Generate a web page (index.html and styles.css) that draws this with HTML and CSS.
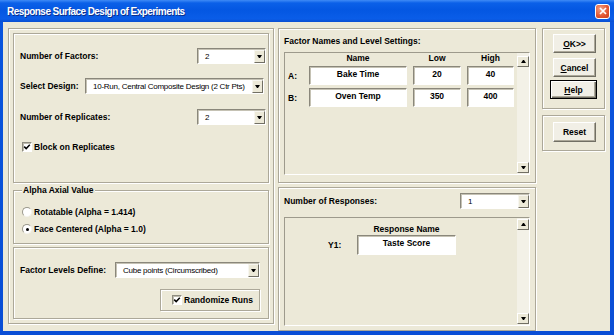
FILE: index.html
```html
<!DOCTYPE html>
<html>
<head>
<meta charset="utf-8">
<title>Response Surface Design of Experiments</title>
<link rel="stylesheet" href="styles.css">
</head>
<body>
<div class="window">
  <div class="titlebar">
    <span class="title">Response Surface Design of Experiments</span>
    <span class="close"><svg width="8" height="8" viewBox="0 0 8 8"><path d="M1 1L7 7M7 1L1 7" stroke="#fff" stroke-width="1.7"/></svg></span>
  </div>
  <div class="frame">
    <div class="client">
      <div class="col-left etched">
        <div class="panel design etched">
          <div class="row r1"><span class="lbl">Number of Factors:</span><div class="combo c-small"><span class="val">2</span><span class="drop"></span></div></div>
          <div class="row r2"><span class="lbl">Select Design:</span><div class="combo c-wide"><span class="val">10-Run, Central Composite Design (2 Ctr Pts)</span><span class="drop"></span></div></div>
          <div class="row r3"><span class="lbl">Number of Replicates:</span><div class="combo c-small"><span class="val">2</span><span class="drop"></span></div></div>
          <div class="check r4"><span class="box"><svg width="8" height="8" viewBox="0 0 8 8"><path d="M1.2 3.6L3.2 5.6L6.8 1.8" fill="none" stroke="#000" stroke-width="1.5"/></svg></span>Block on Replicates</div>
        </div>
        <div class="group alpha etched">
          <div class="legend">Alpha Axial Value</div>
          <div class="radio rad1"><span class="dot"></span>Rotatable (Alpha = 1.414)</div>
          <div class="radio rad2"><span class="dot on"></span>Face Centered (Alpha = 1.0)</div>
        </div>
        <div class="panel levels etched">
          <div class="row l1"><span class="lbl">Factor Levels Define:</span><div class="combo c-levels"><span class="val">Cube points (Circumscribed)</span><span class="drop"></span></div></div>
          <div class="rand etched"><span class="box"><svg width="8" height="8" viewBox="0 0 8 8"><path d="M1.2 3.6L3.2 5.6L6.8 1.8" fill="none" stroke="#000" stroke-width="1.5"/></svg></span>Randomize Runs</div>
        </div>
      </div>

      <div class="col-mid">
        <div class="panel names etched">
          <div class="ptitle">Factor Names and Level Settings:</div>
          <div class="list list1">
            <div class="fgrid">
              <span></span><span class="hdr">Name</span><span class="hdr">Low</span><span class="hdr">High</span>
              <span class="rlab">A:</span><span class="inp">Bake Time</span><span class="inp">20</span><span class="inp">40</span>
              <span class="rlab">B:</span><span class="inp">Oven Temp</span><span class="inp">350</span><span class="inp">400</span>
            </div>
            <div class="sb"><span class="sbtn up"></span><span class="sbtn down"></span></div>
          </div>
        </div>
        <div class="panel resp etched">
          <div class="row rr"><span class="lbl">Number of Responses:</span><div class="combo c-resp"><span class="val">1</span><span class="drop"></span></div></div>
          <div class="list list2">
            <div class="rgrid">
              <span></span><span class="hdr">Response Name</span>
              <span class="rlab y1">Y1:</span><span class="inp">Taste Score</span>
            </div>
            <div class="sb sb2"><span class="sbtn up"></span><span class="sbtn down"></span></div>
          </div>
        </div>
      </div>

      <div class="col-btn">
        <div class="bbox bbox1 etched">
          <div class="btn"><span><u>O</u>K&gt;&gt;</span></div>
          <div class="btn"><span><u>C</u>ancel</span></div>
          <div class="btn help"><span><u>H</u>elp</span></div>
        </div>
        <div class="bbox bbox2 etched">
          <div class="btn">Reset</div>
        </div>
      </div>
    </div>
  </div>
</div>
</body>
</html>
```

FILE: styles.css
```css
* { box-sizing: border-box; margin: 0; padding: 0; }
html, body { width: 614px; height: 335px; overflow: hidden; }
body {
  font-family: "Liberation Sans", Arial, sans-serif;
  font-size: 8.5px;
  color: #000;
  background: #0A52DB;
}
.window {
  width: 614px;
  height: 335px;
  display: flex;
  flex-direction: column;
  background: #0A52DB;
}
.titlebar {
  height: 22px;
  flex: none;
  display: flex;
  align-items: center;
  justify-content: space-between;
  padding: 0 4px 0 7px;
  background: linear-gradient(#3F8BF6 0, #0B60E8 3px, #0457E2 45%, #0A5DE8 85%, #0A4FD2 100%);
}
.title {
  color: #fff;
  font-size: 10px;
  font-weight: bold;
  letter-spacing: -0.55px;
  text-shadow: 1px 1px 0 #0A2F8A;
}
.close {
  width: 15px;
  height: 15px;
  border: 1px solid #fff;
  border-radius: 3px;
  background: radial-gradient(circle at 35% 30%, #F4A184, #E2552F 60%, #C9401D);
  display: flex;
  align-items: center;
  justify-content: center;
}
.frame {
  flex: 1;
  padding: 0 4px 4px 3px;
  background: linear-gradient(#0A55DE, #0A4ED6);
}
.client {
  height: 100%;
  background: #ECE9D8;
  display: flex;
  align-items: flex-start;
  padding: 6px 0 0 5px;
  overflow: hidden;
}
.etched {
  border: 1px solid #ACA899;
  box-shadow: inset 1px 1px 0 #fff, 1px 1px 0 #fff;
}

/* left column */
.col-left {
  width: 266px;
  height: 296px;
  padding: 4px;
  display: flex;
  flex-direction: column;
}
.design {
  height: 150px;
  display: flex;
  flex-direction: column;
  padding: 0 2px 0 6px;
}
.row {
  display: flex;
  align-items: center;
  justify-content: space-between;
  height: 16px;
}
.lbl { font-weight: bold; white-space: nowrap; }
.design .r1 { margin-top: 14px; }
.design .r2 { margin-top: 14px; padding-right: 2px; }
.design .r3 { margin-top: 15px; }
.check {
  display: flex;
  align-items: center;
  height: 12px;
  font-weight: bold;
}
.r4 { margin-top: 16px; padding-left: 2px; }
.box {
  width: 10px;
  height: 10px;
  flex: none;
  margin-right: 2px;
  background: #fff;
  border: 1px solid;
  border-color: #8E8C80 #fff #fff #8E8C80;
  box-shadow: inset 1px 1px 0 #BEBBAE;
  display: flex;
  align-items: center;
  justify-content: center;
}

.combo {
  height: 16px;
  background: #fff;
  border: 1px solid;
  border-color: #8A877B #fff #fff #8A877B;
  box-shadow: inset 1px 1px 0 #C5C2B4;
  display: flex;
  align-items: stretch;
  padding: 1px 0 0 1px;
}
.val {
  flex: 1;
  padding-left: 6px;
  white-space: nowrap;
  overflow: hidden;
  line-height: 13px;
  font-size: 8px;
  letter-spacing: -0.25px;
}
.drop {
  width: 11px;
  flex: none;
  background: #ECE9D8;
  border: 1px solid;
  border-color: #F7F6F0 #716F64 #716F64 #F7F6F0;
  display: flex;
  align-items: center;
  justify-content: center;
}
.drop::after, .sbtn.down::after {
  content: "";
  width: 1px;
  height: 0;
  border-left: 2px solid transparent;
  border-right: 2px solid transparent;
  border-top: 3px solid #000;
}
.sbtn.up::after {
  content: "";
  width: 1px;
  height: 0;
  border-left: 2px solid transparent;
  border-right: 2px solid transparent;
  border-bottom: 3px solid #000;
}
.c-small { width: 69px; }
.c-wide { width: 179px; }
.c-levels { width: 145px; }
.c-resp { width: 70px; }

.alpha {
  margin-top: 7px;
  height: 54px;
  display: flex;
  flex-direction: column;
  padding-left: 8px;
}
.legend {
  align-self: flex-start;
  margin-top: -6px;
  padding: 0 1px;
  background: #ECE9D8;
  font-weight: bold;
  line-height: 11px;
}
.radio {
  display: flex;
  align-items: center;
  height: 12px;
  font-weight: bold;
}
.rad1 { margin-top: 10px; }
.rad2 { margin-top: 5px; }
.dot {
  width: 10px;
  height: 10px;
  flex: none;
  margin-right: 2px;
  border-radius: 50%;
  background: #fff;
  border: 1px solid;
  border-color: #9A988C #F4F3EE #F4F3EE #9A988C;
  display: flex;
  align-items: center;
  justify-content: center;
}
.dot.on::after {
  content: "";
  width: 3px;
  height: 3px;
  border-radius: 50%;
  background: #000;
}

.levels {
  margin-top: 3px;
  flex: 1;
  display: flex;
  flex-direction: column;
  padding: 0 8px 0 6px;
}
.l1 { margin-top: 14px; }
.rand {
  align-self: flex-end;
  margin-top: 11px;
  width: 100px;
  height: 22px;
  display: flex;
  align-items: center;
  padding-left: 11px;
  font-weight: bold;
}

/* middle column */
.col-mid {
  width: 258px;
  height: 303px;
  margin-left: 4px;
  display: flex;
  flex-direction: column;
}
.names {
  height: 155px;
  flex: none;
  padding: 0 5px;
  display: flex;
  flex-direction: column;
}
.ptitle {
  font-weight: bold;
  margin-top: 7px;
  line-height: 11px;
}
.list {
  display: flex;
  background: #ECE9D8;
  border: 1px solid;
  border-color: #9D9A8C #fff #fff #9D9A8C;
}
.list1 { margin-top: 5px; height: 123px; }
.fgrid {
  flex: 1;
  display: grid;
  grid-template-columns: 18px 98px 48px 47px;
  grid-template-rows: 10px 19px 19px;
  column-gap: 6px;
  row-gap: 3px;
  align-content: start;
  align-items: center;
}
.hdr {
  text-align: center;
  font-weight: bold;
  line-height: 10px;
}
.rlab {
  padding-left: 3px;
  font-weight: bold;
}
.inp {
  height: 19px;
  background: #fff;
  border: 1px solid;
  border-color: #8A877B #fff #fff #8A877B;
  box-shadow: inset 1px 1px 0 #C5C2B4;
  font-weight: bold;
  text-align: center;
  line-height: 14px;
}
.sb {
  width: 12px;
  flex: none;
  display: flex;
  flex-direction: column;
  justify-content: space-between;
  padding: 3px 0 1px;
  background: #F3F1E7;
}
.sb2 { padding-top: 1px; }
.sbtn {
  height: 11px;
  background: #ECE9D8;
  border: 1px solid;
  border-color: #fff #716F64 #716F64 #fff;
  display: flex;
  align-items: center;
  justify-content: center;
}
.resp {
  flex: 1;
  margin-top: 4px;
  padding: 0 5px;
  display: flex;
  flex-direction: column;
}
.rr { margin-top: 5px; }
.list2 { margin-top: 8px; flex: 1; margin-bottom: 4px; }
.rgrid {
  flex: 1;
  display: grid;
  grid-template-columns: 66px 99px;
  grid-template-rows: 11px 20px;
  column-gap: 6px;
  row-gap: 1px;
  padding-top: 5px;
  align-content: start;
  align-items: center;
}
.rgrid .inp { height: 20px; }
.y1 { padding-left: 43px; }

/* button column */
.col-btn {
  width: 63px;
  margin-left: 6px;
  display: flex;
  flex-direction: column;
}
.bbox {
  display: flex;
  flex-direction: column;
  padding-left: 10px;
}
.bbox1 { height: 81px; padding-top: 5px; gap: 5px; }
.bbox2 { height: 36px; margin-top: 6px; padding-top: 6px; }
.btn {
  width: 43px;
  height: 19px;
  font-weight: bold;
  display: flex;
  align-items: center;
  justify-content: center;
  background: #F1EFE6;
  border: 1px solid;
  border-color: #fff #716F64 #716F64 #fff;
  box-shadow: inset -1px -1px 0 #ACA899;
}
.bbox2 .btn { height: 20px; }
.help {
  width: 47px;
  margin-left: -3px;
  margin-top: -2px;
  border: 1px solid #000;
  box-shadow: inset 1px 1px 0 #fff, inset -1px -1px 0 #716F64, inset -2px -2px 0 #ACA899;
}
```
